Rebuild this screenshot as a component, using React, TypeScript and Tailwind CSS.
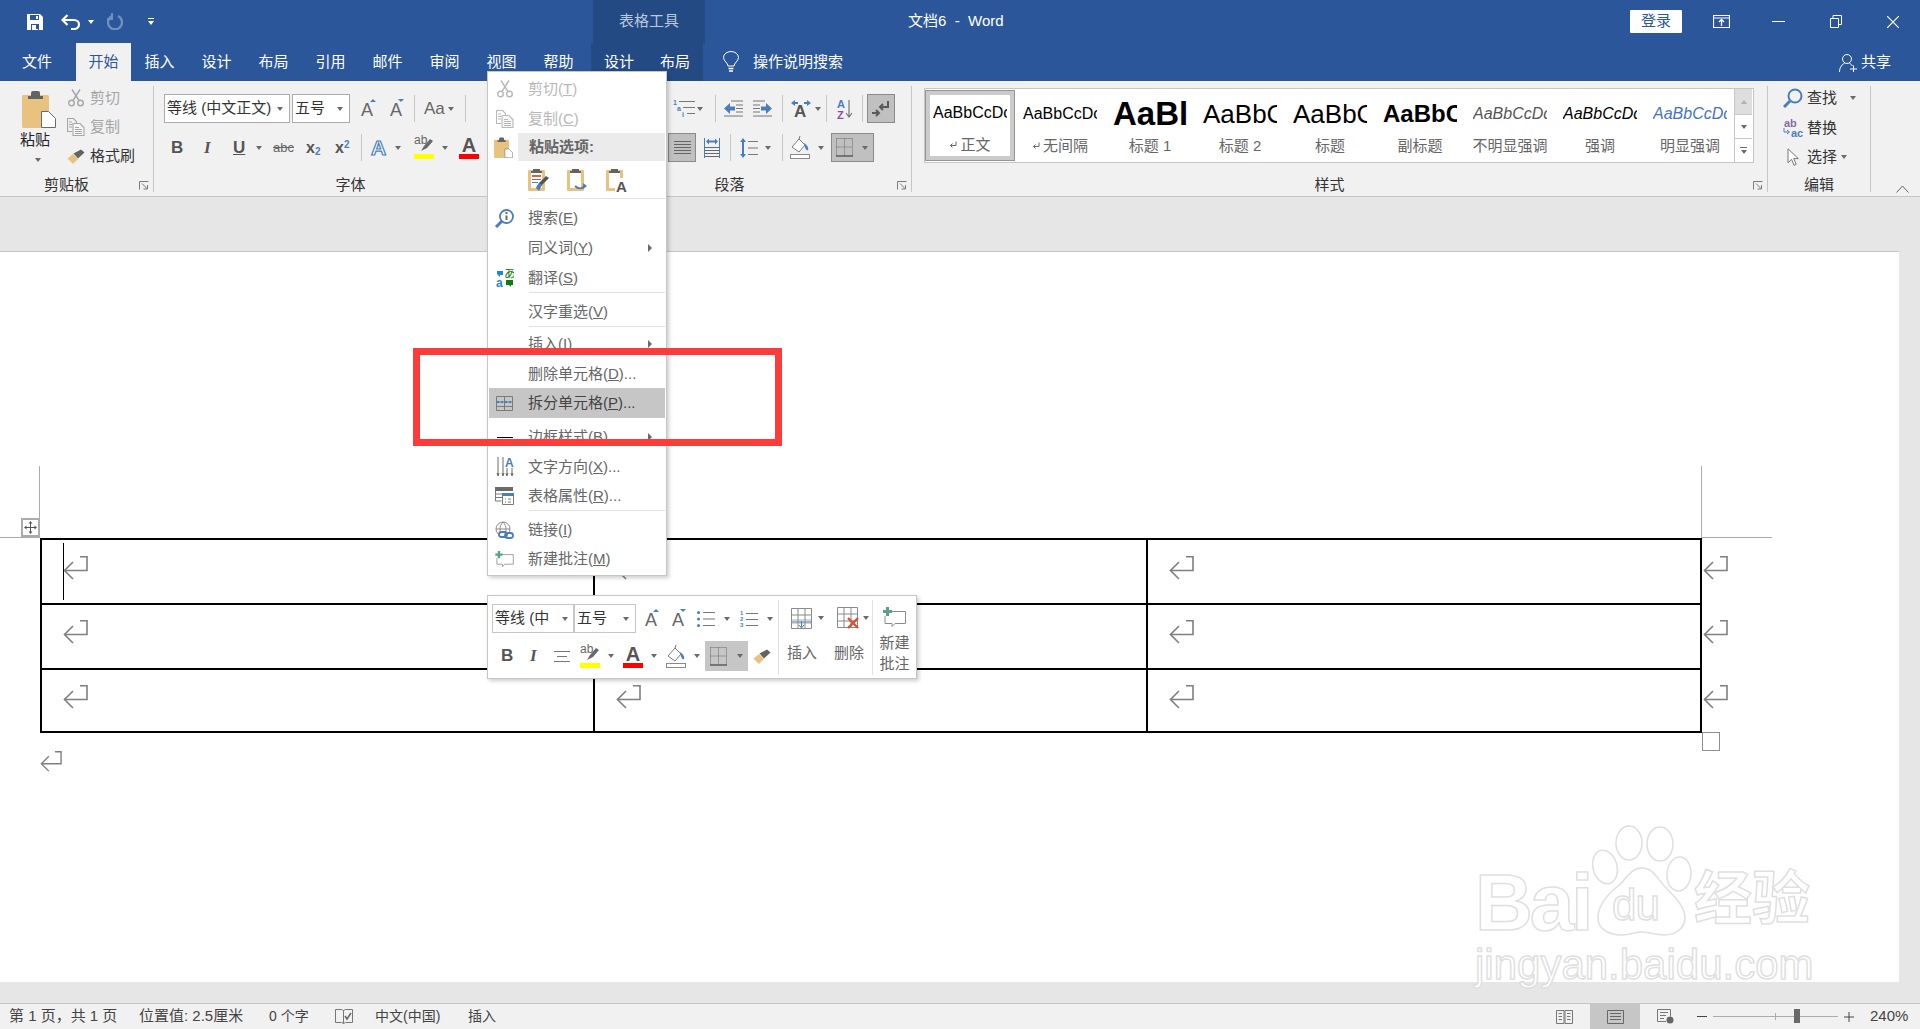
import React from 'react';

const GREY = '#6a6a6a';
const BLUE = '#4a7ebb';
const TAN = '#e8c27f';

function Caret({ className = '' }: { className?: string }) {
  return <span className={'block w-0 h-0 shrink-0 border-x-[3px] border-x-transparent border-t-[4px] border-t-[#6a6a6a] ' + className} />;
}

function Sep({ className = '' }: { className?: string }) {
  return <span className={'block w-px h-[27px] shrink-0 bg-[#c6c6c6] ' + className} />;
}

function Launcher() {
  return (
    <svg width="10" height="9" viewBox="0 0 10 9" className="absolute right-[4px] top-[3px]" fill="none" stroke="#7a7a7a">
      <path d="M.5 8.5v-8h9" />
      <path d="M3 2.5l5 5M8.5 4v4h-4" />
    </svg>
  );
}

function ReturnMark({ className = '' }: { className?: string }) {
  return (
    <svg width="25" height="24" viewBox="0 0 25 24" fill="none" stroke="#7f7f7f" strokeWidth="1.6" className={'block shrink-0 ' + className}>
      <path d="M17 .8h7v13.7H1.5" />
      <path d="M10 6l-8.5 8.5L10 23" />
    </svg>
  );
}

function Scissors({ color = '#a6a6a6' }: { color?: string }) {
  return (
    <svg width="16" height="18" viewBox="0 0 16 18" fill="none" stroke={color} strokeWidth="1.4">
      <circle cx="3.5" cy="14" r="2.8" />
      <circle cx="12.5" cy="14" r="2.8" />
      <path d="M5 11.5L12 .5M11 11.5L4 .5" />
    </svg>
  );
}

function CopyIcon({ color = '#a6a6a6' }: { color?: string }) {
  return (
    <svg width="18" height="18" viewBox="0 0 18 18" fill="none" stroke={color} strokeWidth="1.1">
      <path d="M5 13.5H.5V.5h6l3 3v2" />
      <path d="M6 5.5h7l4 4v8H6z" fill="#f6f6f6" />
      <path d="M8 9.5h4M8 11.5h7M8 13.5h7M8 15.5h7M2 4h3M2 6.5h3M2 9h3" />
    </svg>
  );
}

function PasteIcon({ w = 34, h = 38 }: { w?: number; h?: number }) {
  return (
    <svg width={w} height={h} viewBox="0 0 34 38" className="block">
      <rect x="0" y="5" width="27" height="33" rx="1.5" fill={TAN} />
      <path d="M9 6V3a2 2 0 012-2h5a2 2 0 012 2v3h3v3H6V6z" fill="#636363" />
      <path d="M19.5 21.5h7l7 7v9h-14z" fill="#fff" stroke="#6a6a6a" />
    </svg>
  );
}

function Brush() {
  return (
    <svg width="18" height="15" viewBox="0 0 18 15">
      <path d="M.5 9.5L6 5l5 5-5 5z" fill={TAN} />
      <path d="M6.5 4.5L14 .5l3.500 3L11 9.500z" fill="#636363" />
    </svg>
  );
}

function GrowA({ down = false, w = 15 }: { down?: boolean; w?: number }) {
  return (
    <span className="relative block h-[20px] shrink-0 text-[#666] text-[18px] leading-[22px]" style={{ width: w }}>
      A
      <span className={'absolute right-0 top-0 w-0 h-0 border-x-[3px] border-x-transparent ' + (down ? 'border-t-[3px] border-t-[#4a7ebb]' : 'border-b-[3px] border-b-[#4a7ebb]')} />
    </span>
  );
}

function Highlighter() {
  return (
    <span className="relative block w-[20px] h-[23px] shrink-0">
      <span className="absolute left-0 top-[-2px] text-[12px] leading-[12px] text-[#666]">ab</span>
      <svg width="20" height="23" viewBox="0 0 20 23" className="absolute left-0 top-0">
        <path d="M7 15l3-5 6-7 3 2-6 7z" fill="#6a6a6a" />
      </svg>
      <span className="absolute left-0 bottom-0 w-full h-[5px] bg-[#ffff00]" />
    </span>
  );
}

function ColorA() {
  return (
    <span className="relative block w-[20px] h-[23px] shrink-0 text-center text-[#555] text-[20px] font-bold leading-[18px]">
      A
      <span className="absolute left-0 bottom-0 w-full h-[5px] bg-[#ff0000]" />
    </span>
  );
}

function Bucket() {
  return (
    <svg width="20" height="23" viewBox="0 0 20 23" fill="none">
      <path d="M2 11l7-8 6 6-6 7z" stroke="#7a7a7a" fill="#fff" />
      <path d="M9 3l1-3" stroke="#7a7a7a" />
      <path d="M14 7c3 2 5 5 4 7-2 1-3-2-4-7z" fill={BLUE} />
      <rect x=".5" y="18.5" width="19" height="4" stroke="#8a8a8a" fill="#fff" />
    </svg>
  );
}

function BorderIcon() {
  return (
    <svg width="17" height="19" viewBox="0 0 17 19" fill="none">
      <path d="M.5.5h16v17M.5 .5v17M8.5 .5v17M.5 9h16" stroke="#6a6a6a" strokeDasharray="1 1" />
      <path d="M0 18h17" stroke="#555" strokeWidth="1.4" />
    </svg>
  );
}

function Lines({ w = 18, n = 6, color = '#777' }: { w?: number; n?: number; color?: string }) {
  return (
    <svg width={w} height={n * 3} viewBox={'0 0 ' + w + ' ' + n * 3} stroke={color}>
      {Array.from({ length: n }).map((_, i) => (
        <path key={i} d={'M0 ' + (i * 3 + 1.5) + 'h' + w} />
      ))}
    </svg>
  );
}

function NumberList() {
  return (
    <svg width="18" height="18" viewBox="0 0 18 18" fill={BLUE} stroke="none" fontSize="6" fontFamily="Liberation Sans" fontWeight="bold">
      <text x="0" y="5">1</text>
      <text x="0" y="11">2</text>
      <text x="0" y="17">3</text>
      <path d="M6 3h12v1H6zM6 9h12v1H6zM6 15h12v1H6z" fill="#777" />
    </svg>
  );
}

function BulletList() {
  return (
    <svg width="18" height="18" viewBox="0 0 18 18">
      <circle cx="1.5" cy="2.5" r="1.5" fill={BLUE} />
      <circle cx="1.5" cy="9" r="1.5" fill={BLUE} />
      <circle cx="1.5" cy="15.5" r="1.5" fill={BLUE} />
      <path d="M6 2h12v1H6zM6 8.5h12v1H6zM6 15h12v1H6z" fill="#777" />
    </svg>
  );
}

function MultiLevel() {
  return (
    <svg width="22" height="17" viewBox="0 0 22 17" fontSize="7" fontFamily="Liberation Sans" fontWeight="bold" fill={BLUE}>
      <text x="0" y="5">1</text>
      <text x="4" y="11">a</text>
      <text x="9" y="17">i</text>
      <path d="M6 1h16v1H6zM10 7h12v1H10zM14 13h8v1h-8z" fill="#777" />
    </svg>
  );
}

function Indent({ flip = false }: { flip?: boolean }) {
  return (
    <svg width="19" height="17" viewBox="0 0 19 17" className={flip ? '-scale-x-100' : ''}>
      <path d="M0 8.5L6 3v3.5h5v4H6V14z" fill={BLUE} />
      <path d="M7 .5h12v1H7zM12 4.5h7v1h-7zM12 8h7v1h-7zM12 11.5h7v1h-7zM0 15.5h19v1H0z" fill="#777" />
    </svg>
  );
}

function TextDirection() {
  return (
    <svg width="20" height="17" viewBox="0 0 20 17" fontFamily="Liberation Sans" fontWeight="bold">
      <text x="3" y="17" fontSize="17" fill="#555">A</text>
      <path d="M0 3l4-3v2h3v2H4v2zM20 3l-4-3v2h-3v2h3v2z" fill={BLUE} />
    </svg>
  );
}

function SortAZ() {
  return (
    <svg width="16" height="20" viewBox="0 0 16 20" fontFamily="Liberation Sans" fontWeight="bold" fontSize="11">
      <text x="0" y="9" fill={BLUE}>A</text>
      <text x="0" y="20" fill="#8a4fa5">Z</text>
      <path d="M12 1v17M9 14l3 4 3-4" fill="none" stroke="#777" strokeWidth="1.2" />
    </svg>
  );
}

function PilcrowArrows() {
  return (
    <svg width="18" height="18" viewBox="0 0 18 18" fill="none" stroke="#5a5a5a" strokeWidth="2">
      <path d="M16 1v6H8M11 4L8 7l3 3" />
      <path d="M0 13h7M4 10l3 3-3 3" />
    </svg>
  );
}

function Distribute() {
  return (
    <svg width="18" height="20" viewBox="0 0 18 20">
      <path d="M1 6.5V0h1v20H1zM16 0h1v20h-1z" fill={BLUE} />
      <path d="M3 3.5l3-3v2h6v-2l3 3-3 3v-2H6v2z" fill={BLUE} />
      <path d="M2 9h14v1H2zM2 12h14v1H2zM2 15h14v1H2zM2 18h14v1H2z" fill="#666" />
    </svg>
  );
}

function LineSpacing() {
  return (
    <svg width="18" height="20" viewBox="0 0 18 20">
      <path d="M3 0l3 4H4v12h2l-3 4-3-4h2V4H0z" fill={BLUE} />
      <path d="M8 3h10v1H8zM8 9.5h10v1H8zM8 16h10v1H8z" fill="#777" />
    </svg>
  );
}

function Magnifier() {
  return (
    <svg width="20" height="20" viewBox="0 0 20 20" fill="none" stroke={BLUE}>
      <circle cx="12" cy="8" r="6.5" strokeWidth="2" />
      <path d="M7 13l-6 6" strokeWidth="3" />
    </svg>
  );
}

function Replace() {
  return (
    <svg width="20" height="18" viewBox="0 0 20 18" fontFamily="Liberation Sans" fontWeight="bold" fontSize="11">
      <text x="1" y="8" fill="#8a6aa5">ab</text>
      <text x="8" y="18" fill={BLUE}>ac</text>
      <path d="M1 9v4h5M4 11l2.500 2L4 15" fill="none" stroke={BLUE} />
    </svg>
  );
}

function CursorIcon() {
  return (
    <svg width="12" height="18" viewBox="0 0 12 18" fill="#fff" stroke="#777">
      <path d="M1 .8v14l3.5-3.5 2.5 6 2.2-1-2.5-5.7h4.6z" />
    </svg>
  );
}

function Group({ w, label, launcher, pr, children }: { w: string; label: string; launcher?: boolean; pr?: string; children: React.ReactNode }) {
  return (
    <div className={'flex flex-col h-[106px] border-r border-[#c6c6c6] shrink-0 ' + w}>
      <div className="h-[92px] shrink-0">{children}</div>
      <div className={'relative h-[14px] flex justify-center items-center text-[15px] leading-[14px] text-[#333] ' + (pr || '')}>
        {label}
        {launcher && <Launcher />}
      </div>
    </div>
  );
}

function Combo({ w, text }: { w: string; text: string }) {
  return (
    <span className={'flex items-center h-[29px] shrink-0 bg-white border border-[#ababab] text-[15px] text-[#333] overflow-hidden whitespace-nowrap ' + w}>
      <span className="pl-[2px] flex-1 overflow-hidden">{text}</span>
      <Caret className="mr-[6px]" />
    </span>
  );
}

function StyleItem({ sample, sampleClass, label, mark, selected }: { sample: string; sampleClass: string; label: string; mark?: boolean; selected?: boolean }) {
  const body = (
    <>
      <div className={'h-[46px] flex items-center overflow-hidden whitespace-nowrap mx-auto w-[74px] ' + sampleClass}>{sample}</div>
      <div className="h-[18px] flex items-center justify-center gap-[3px] text-[15px] text-[#666] whitespace-nowrap">
        {mark && (
          <svg width="8" height="8" viewBox="0 0 8 8" fill="none" stroke="#666">
            <path d="M7 .5v4H1.5M3.5 2.5l-2 2 2 2" />
          </svg>
        )}
        {label}
      </div>
    </>
  );
  if (selected) {
    return (
      <div className="w-[90px] h-[71px] shrink-0 mt-[1px] border border-[#949494]">
        <div className="border-[4px] border-[#cbcbcb] h-full bg-white overflow-hidden">
          <div className="-mt-[5px] -mx-[5px]">{body}</div>
        </div>
      </div>
    );
  }
  return <div className="w-[90px] shrink-0 pt-[2px]">{body}</div>;
}

function MenuRow({ icon, label, acc, dots, disabled, arrow, selected, className = '' }: { icon?: React.ReactNode; label: string; acc: string; dots?: boolean; disabled?: boolean; arrow?: boolean; selected?: boolean; className?: string }) {
  return (
    <div className={'relative flex items-center h-[30px] mx-px shrink-0 text-[15px] whitespace-nowrap ' + (disabled ? 'text-[#b8b8b8] ' : selected ? 'text-[#444] ' : 'text-[#666] ') + (selected ? 'bg-[#c6c6c6] ' : '') + className}>
      <span className="w-[29px] flex justify-center items-center ml-[1px] shrink-0">{icon}</span>
      <span className="ml-[9px]">
        {label}(<span className="underline">{acc}</span>){dots ? '...' : ''}
      </span>
      {arrow && <span className="absolute left-[159px] w-0 h-0 border-y-[4px] border-y-transparent border-l-[4px] border-l-[#6a6a6a]" />}
    </div>
  );
}

function MenuSep({ className = 'h-[5px]' }: { className?: string }) {
  return (
    <div className={'shrink-0 -mt-px ml-[41px] mr-[1px] ' + className}>
      <div className="h-px bg-[#e1e1e1]" />
    </div>
  );
}

function CommentIcon() {
  return (
    <svg width="19" height="16" viewBox="0 0 23 20" fill="none">
      <path d="M6 4.5h16.5v12H12l-3 3v-3H2V9" stroke="#8a8a8a" />
      <path d="M3 0h3v3h3v3H6v3H3V6H0V3h3z" fill="#5ba08a" />
    </svg>
  );
}

function ContextMenu() {
  return (
    <div className="absolute left-[487px] top-[71px] w-[180px] h-[505px] bg-white border border-[#c6c6c6] shadow-[2px_2px_4px_rgba(0,0,0,0.2)] flex flex-col pt-[2px]">
      <MenuRow disabled label="剪切" acc="T" icon={<Scissors color="#b8b8b8" />} />
      <MenuRow disabled label="复制" acc="C" icon={<CopyIcon color="#b8b8b8" />} />
      <div className="flex h-[28px] -mt-px shrink-0">
        <span className="w-[30px] flex justify-center items-center pl-[1px]"><PasteIcon w={19} h={21} /></span>
        <span className="flex-1 mr-px bg-[#ebebeb] flex items-center pl-[11px] text-[15px] font-bold text-[#666]">粘贴选项:</span>
      </div>
      <div className="flex h-[37px] shrink-0 items-center pl-[40px] gap-[18px]">
        <svg width="21" height="24" viewBox="0 0 21 24">
          <rect y="2" width="17" height="21" rx="1" fill={TAN} />
          <rect x="3" y="5" width="11" height="15" fill="#fff" />
          <path d="M5 3V1h7v2h2v2H3V3z" fill="#636363" />
          <path d="M4 7h9v2H4z" fill="#e06040" />
          <path d="M4 11h9v1H4zM4 14h6v1H4z" fill={BLUE} />
          <path d="M8 20l3-5 7-7 3 2-7 7z" fill="#555" />
          <path d="M8 20l3-5 3 2-3 6z" fill={BLUE} />
        </svg>
        <svg width="21" height="24" viewBox="0 0 21 24">
          <rect y="2" width="17" height="21" rx="1" fill={TAN} />
          <rect x="3" y="5" width="11" height="15" fill="#fff" />
          <path d="M5 3V1h7v2h2v2H3V3z" fill="#636363" />
          <path d="M8 18c3 3 7 3 10 0" fill="none" stroke={BLUE} strokeWidth="2" />
          <path d="M16 15l4 3-4 3z" fill={BLUE} />
        </svg>
        <svg width="21" height="24" viewBox="0 0 21 24" fontFamily="Liberation Sans" fontSize="15" fontWeight="bold">
          <rect y="2" width="17" height="21" rx="1" fill={TAN} />
          <rect x="3" y="5" width="11" height="15" fill="#fff" />
          <path d="M5 3V1h7v2h2v2H3V3z" fill="#636363" />
          <rect x="9" y="10" width="12" height="14" fill="#fff" />
          <text x="10" y="24" fill="#555">A</text>
        </svg>
      </div>
      <MenuSep className="h-[5px] mt-0" />
      <MenuRow label="搜索" acc="E" icon={
        <svg width="19" height="19" viewBox="0 0 19 19" fill="none" stroke={BLUE}>
          <circle cx="11.5" cy="7.5" r="6.5" strokeWidth="1.8" />
          <path d="M7 12l-6 6" strokeWidth="3" />
          <path d="M10.5 6.5h2V11h-2zM10.5 3h2v2h-2z" fill={GREY} stroke="none" />
        </svg>
      } />
      <MenuRow label="同义词" acc="Y" arrow />
      <MenuRow label="翻译" acc="S" icon={
        <svg width="18" height="18" viewBox="0 0 18 18" fontFamily="Liberation Sans" fontSize="12">
          <text x="0" y="18" fill="#1e88d2" fontWeight="bold">a</text>
          <text x="8" y="9" fill="#107c10" fontFamily="Noto Sans CJK JP">あ</text>
          <path d="M1 2h6v4H4v2L1 5z" fill="#1e88d2" />
          <path d="M10 11h7v5h-2v2l-2-2h-3z" fill="#107c10" />
        </svg>
      } />
      <MenuSep />
      <MenuRow label="汉字重选" acc="V" />
      <MenuSep className="h-[3px]" />
      <MenuRow label="插入" acc="I" arrow />
      <MenuRow label="删除单元格" acc="D" dots />
      <MenuRow selected className="-mt-px" label="拆分单元格" acc="P" dots icon={
        <svg width="17" height="15" viewBox="0 0 17 15" fill="none" stroke="#7a7a7a">
          <path d="M.5.5h16v14H.5zM8.5.5v14M.5 10.5h16" />
          <path d="M.5 6h16" stroke={BLUE} strokeWidth="2" strokeDasharray="3 1" />
        </svg>
      } />
      <MenuSep />
      <MenuRow label="边框样式" acc="B" arrow icon={<span className="block w-[16px] h-px bg-black" />} />
      <MenuRow label="文字方向" acc="X" dots icon={
        <svg width="18" height="20" viewBox="0 0 18 20" fontFamily="Liberation Sans" fontWeight="bold" fontSize="12">
          <text x="9" y="10" fill={BLUE}>A</text>
          <path d="M2 0v17M1 16l1 3 1-3M7 0v17M6 16l1 3 1-3M11 11v6M10 16l1 3 1-3M16 11v6M15 16l1 3 1-3" stroke="#6a6a6a" fill="none" />
        </svg>
      } />
      <MenuRow className="-mt-px" label="表格属性" acc="R" dots icon={
        <svg width="19" height="18" viewBox="0 0 19 18" fill="none" stroke="#7a7a7a">
          <path d="M0 0h18v4H0z" fill="#6a6a6a" stroke="none" />
          <path d="M.5 4v10h6M0 7h7M0 10.5h7" />
          <path d="M7 6h12v3H7z" fill={BLUE} stroke="none" />
          <path d="M7.5 9v8.5h11V9M10 12h1M13 12h3M10 15h1M13 15h3" />
        </svg>
      } />
      <MenuSep />
      <MenuRow label="链接" acc="I" icon={
        <svg width="19" height="19" viewBox="0 0 19 19" fill="none">
          <circle cx="8" cy="8" r="7" stroke="#8a8a8a" />
          <path d="M1 8h14M8 1c-4 4-4 10 0 14M8 1c4 4 4 10 0 14" stroke="#8a8a8a" />
          <rect x="4" y="11" width="8" height="5" rx="2.5" stroke={BLUE} strokeWidth="1.8" fill="#fff" />
          <rect x="10" y="12" width="8" height="5" rx="2.5" stroke={BLUE} strokeWidth="1.8" />
        </svg>
      } />
      <MenuRow className="-mt-px" label="新建批注" acc="M" icon={<CommentIcon />} />
    </div>
  );
}

function MiniToolbar() {
  return (
    <div className="absolute left-[487px] top-[595px] w-[430px] h-[84px] bg-white border border-[#c6c6c6] shadow-[2px_2px_4px_rgba(0,0,0,0.2)] flex">
      <div className="w-[290px] shrink-0 flex flex-col pt-[8px]">
        <div className="flex items-center h-[29px]">
          <span className="ml-[4px] w-[82px] flex items-center h-[29px] shrink-0 border border-[#c6c6c6] text-[15px] text-[#333] whitespace-nowrap overflow-hidden">
            <span className="pl-[2px] w-[66px] overflow-hidden">等线 (中</span>
            <Caret className="ml-[3px]" />
          </span>
          <span className="w-[62px] flex items-center h-[29px] shrink-0 border border-[#c6c6c6] text-[15px] text-[#333]">
            <span className="pl-[2px] flex-1">五号</span>
            <Caret className="mr-[6px]" />
          </span>
          <span className="ml-[9px] flex"><GrowA w={14} /></span>
          <span className="ml-[13px] flex"><GrowA w={14} down /></span>
          <span className="ml-[11px]"><BulletList /></span>
          <Caret className="ml-[9px]" />
          <span className="ml-[10px]"><NumberList /></span>
          <Caret className="ml-[9px]" />
        </div>
        <div className="flex items-center h-[30px] mt-[8px]">
          <b className="ml-[13px] w-[9px] text-[17px] text-[#555]">B</b>
          <i className="ml-[20px] w-[8px] text-[17px] font-bold text-[#555] [font-family:'Liberation_Serif',serif]">I</i>
          <span className="ml-[16px]">
            <svg width="16" height="11" viewBox="0 0 16 11" fill="#777"><path d="M0 0h16v1H0zM3 5h10v1H3zM0 10h16v1H0z" /></svg>
          </span>
          <span className="ml-[10px]"><Highlighter /></span>
          <Caret className="ml-[8px]" />
          <span className="ml-[9px]"><ColorA /></span>
          <Caret className="ml-[8px]" />
          <span className="ml-[9px]"><Bucket /></span>
          <Caret className="ml-[8px]" />
          <span className="ml-[5px] w-[43px] h-[30px] bg-[#c6c6c6] flex items-center pl-[5px] shrink-0">
            <BorderIcon />
            <Caret className="ml-[10px]" />
          </span>
          <span className="ml-[5px]"><Brush /></span>
        </div>
      </div>
      <span className="w-px h-[75px] mt-[4px] bg-[#e1e1e1] shrink-0" />
      <div className="w-[93px] shrink-0 flex flex-col pt-[11px] text-[15px] text-[#666]">
        <div className="flex items-center h-[22px]">
          <span className="ml-[12px]">
            <svg width="21" height="21" viewBox="0 0 21 21" fill="none" stroke="#8a8a8a">
              <path d="M0 11h21v5H0z" fill="#c9d9ea" stroke="none" />
              <path d="M.5.5h20v20H.5zM7 .5v20M14 .5v20M.5 7h20M.5 14h20" />
              <path d="M10.5 13v6M8 17l2.5 3 2.5-3" stroke={BLUE} />
            </svg>
          </span>
          <Caret className="ml-[6px]" />
          <span className="ml-[13px]">
            <svg width="23" height="22" viewBox="0 0 23 22" fill="none" stroke="#8a8a8a">
              <path d="M.5.5h20v20H.5zM7 .5v20M14 .5v20M.5 7h20M.5 14h20" />
              <path d="M11 11l10 10M21 11L11 21" stroke="#d9512c" strokeWidth="2.4" />
            </svg>
          </span>
          <Caret className="ml-[3px]" />
        </div>
        <div className="flex mt-[13px] whitespace-nowrap">
          <span className="ml-[8px]">插入</span>
          <span className="ml-[17px]">删除</span>
        </div>
      </div>
      <span className="w-px h-[75px] mt-[4px] bg-[#e1e1e1] shrink-0" />
      <div className="flex-1 flex flex-col items-center pt-[10px] text-[15px] leading-[21px] text-[#666]">
        <svg width="23" height="22" viewBox="0 0 23 20" fill="none">
          <path d="M6 4.5h16.5v12H12l-3 3v-3H2V9" stroke="#8a8a8a" />
          <path d="M3 0h3v3h3v3H6v3H3V6H0V3h3z" fill="#5ba08a" />
        </svg>
        <span className="mt-[4px]">新建</span>
        <span>批注</span>
      </div>
    </div>
  );
}

function Watermark() {
  const stroke = '[-webkit-text-stroke:1.5px_#dfdfdf] text-white';
  return (
    <div className="absolute left-[1475px] top-[822px] w-[350px] h-[170px] pointer-events-none">
      <span className={'absolute left-0 top-[36px] text-[80px] leading-[90px] font-bold tracking-[-3px] ' + stroke}>Bai</span>
      <svg width="105" height="118" viewBox="0 0 105 118" className="absolute left-[115px] top-0" fill="#fff" stroke="#dfdfdf" strokeWidth="1.5">
        <ellipse cx="39" cy="21" rx="13" ry="17" />
        <ellipse cx="70" cy="22" rx="13" ry="17" />
        <ellipse cx="15" cy="45" rx="12" ry="17" transform="rotate(-15 15 45)" />
        <ellipse cx="89" cy="52" rx="12" ry="17" transform="rotate(5 89 52)" />
        <path d="M52 46C40 46 36 58 28 64 18 72 8 84 8 96 8 108 20 113 32 113 40 113 46 110 52 110 58 110 66 113 74 113 86 113 95 106 95 96 95 84 84 74 76 66 68 58 64 46 52 46Z" />
      </svg>
      <span className={'absolute left-[137px] top-[58px] text-[44px] leading-[50px] tracking-[-1px] ' + stroke}>du</span>
      <span className={'absolute left-[219px] top-[42px] text-[58px] leading-[70px] font-bold whitespace-nowrap ' + stroke}>经验</span>
      <span className={'absolute left-0 top-[118px] text-[42px] leading-[50px] whitespace-nowrap ' + stroke}>jingyan.baidu.com</span>
    </div>
  );
}

function TableRow({ h, pt, last }: { h: string; pt: string; last?: boolean }) {
  return (
    <>
      {[0, 1, 2].map((i) => (
        <div key={i} className={h + ' ' + pt + ' pl-[21px] ' + (i < 2 ? 'border-r-2 border-black ' : '') + (last ? '' : 'border-b-2 border-black')}>
          <ReturnMark />
        </div>
      ))}
    </>
  );
}

export default function App() {
  return (
    <div className="relative w-[1920px] h-[1029px] overflow-hidden flex flex-col bg-[#e6e6e6] [font-family:'Liberation_Sans','Noto_Sans_CJK_SC',sans-serif]">
      {/* title bar */}
      <div className="h-[43px] bg-[#2b579a] flex items-center text-white shrink-0">
        <svg width="16" height="16" viewBox="0 0 16 16" className="ml-[27px] shrink-0">
          <path d="M0 0h13l3 3v13H0z" fill="#fff" />
          <path d="M3 1h9v5H3zM4 10h8v6H4z" fill="#2b579a" />
          <path d="M9 2h2v3H9zM5 11h6v5H5z" fill="#fff" />
          <path d="M9 11h2v4H9z" fill="#2b579a" />
        </svg>
        <svg width="20" height="16" viewBox="0 0 20 16" fill="none" stroke="#fff" strokeWidth="2.2" className="ml-[18px] shrink-0">
          <path d="M1.5 6H13a5 4.5 0 010 9h-3" />
          <path d="M6.5 1l-5 5 5 5" />
        </svg>
        <span className="ml-[7px] block w-0 h-0 shrink-0 border-x-[3px] border-x-transparent border-t-[4px] border-t-white" />
        <svg width="16" height="17" viewBox="0 0 16 17" fill="none" stroke="#6f8fbf" strokeWidth="2.4" className="ml-[13px] shrink-0">
          <path d="M11 3a7 7 0 11-6 0" />
          <path d="M5 0v6H0" strokeWidth="2" />
        </svg>
        <span className="ml-[25px] flex flex-col gap-[2px] items-center w-[6px] shrink-0">
          <span className="block w-[6px] h-px bg-white" />
          <span className="block w-0 h-0 border-x-[3px] border-x-transparent border-t-[4px] border-t-white" />
        </span>
        <div className="w-[439px] shrink-0" />
        <div className="w-[112px] h-[43px] bg-[#234a82] flex items-center justify-center text-[15px] text-[#b9c9e0] shrink-0">表格工具</div>
        <div className="w-[203px] shrink-0" />
        <span className="text-[15px] whitespace-nowrap w-[722px] shrink-0">文档6&nbsp; -&nbsp; Word</span>
        <span className="w-[52px] h-[23px] bg-white rounded-[1px] text-[#2b579a] text-[15px] flex items-center justify-center shrink-0">登录</span>
        <svg width="17" height="13" viewBox="0 0 17 13" fill="none" stroke="#fff" className="ml-[31px] shrink-0">
          <path d="M.5.5h16v12H.5zM0 3h17" strokeWidth="1.2" />
          <path d="M8.5 11V5M6 7l2.5-2.5L11 7" strokeWidth="1.3" />
        </svg>
        <span className="ml-[42px] w-[13px] h-px bg-white shrink-0" />
        <svg width="12" height="13" viewBox="0 0 12 13" fill="none" stroke="#fff" className="ml-[45px] shrink-0">
          <path d="M.5 3.5h8v9h-8zM3 3.5V.5h8.5v9H9" />
        </svg>
        <svg width="12" height="12" viewBox="0 0 12 12" fill="none" stroke="#fff" strokeWidth="1.2" className="ml-[45px] shrink-0">
          <path d="M0 0l12 12M12 0L0 12" />
        </svg>
      </div>
      {/* tab row */}
      <div className="h-[38px] bg-[#2b579a] flex text-[15px] text-white shrink-0">
        <span className="w-[74px] mr-[2px] flex items-center justify-center">文件</span>
        <span className="w-[55px] flex items-center justify-center bg-[#f1f1f1] text-[#2b579a]">开始</span>
        {['插入', '设计', '布局', '引用', '邮件', '审阅', '视图', '帮助'].map((t) => (
          <span key={t} className="w-[57px] flex items-center justify-center">{t}</span>
        ))}
        <div className="w-[112px] ml-[4px] flex bg-[#234a82]">
          <span className="w-[56px] flex items-center justify-center">设计</span>
          <span className="w-[56px] flex items-center justify-center">布局</span>
        </div>
        <svg width="16" height="22" viewBox="0 0 16 22" fill="none" stroke="#fff" className="ml-[20px] mt-[8px] shrink-0">
          <path d="M5 15c0-3-4.5-5-4.5-8.5a7.5 6 0 0115 0C15.5 10 11 12 11 15z" />
          <path d="M5.5 17.5h5M6 20h4" strokeWidth="1.5" />
        </svg>
        <span className="ml-[14px] flex items-center whitespace-nowrap">操作说明搜索</span>
        <svg width="18" height="18" viewBox="0 0 18 18" fill="none" stroke="#fff" className="ml-[996px] mt-[11px] shrink-0">
          <circle cx="8" cy="5" r="4.5" />
          <path d="M.5 18c0-5 3-8 5-8.5M10.5 9.5c1 .3 2 1 3 2.5M11 15h7M14.5 11.5v7" />
        </svg>
        <span className="ml-[4px] flex items-center">共享</span>
      </div>
      {/* ribbon */}
      <div className="h-[116px] bg-[#f1f1f1] border-b border-[#c6c6c6] flex pt-[5px] shrink-0 text-[#444]">
        <Group w="w-[154px]" label="剪贴板" launcher pr="pr-[20px]">
          <div className="flex">
            <div className="w-[67px] shrink-0 flex flex-col items-start">
              <span className="ml-[22px] mt-[4px]"><PasteIcon /></span>
              <span className="ml-[20px] mt-[4px] text-[15px] text-[#222] leading-[16px]">粘贴</span>
              <Caret className="ml-[35px] mt-[10px]" />
            </div>
            <div className="flex flex-col text-[15px]">
              <span className="flex items-center h-[24px] text-[#a6a6a6]"><span className="w-[18px] flex justify-center"><Scissors /></span><span className="ml-[5px]">剪切</span></span>
              <span className="flex items-center h-[24px] mt-[5px] text-[#a6a6a6]"><span className="w-[18px] flex justify-center"><CopyIcon /></span><span className="ml-[5px]">复制</span></span>
              <span className="flex items-center h-[24px] mt-[5px] text-[#333]"><span className="w-[18px] flex justify-center"><Brush /></span><span className="ml-[5px]">格式刷</span></span>
            </div>
          </div>
        </Group>
        <Group w="w-[394px]" label="字体">
          <div className="flex items-center mt-[8px] h-[29px]">
            <span className="ml-[10px] flex"><Combo w="w-[126px]" text="等线 (中文正文)" /></span>
            <span className="ml-[2px] flex"><Combo w="w-[58px]" text="五号" /></span>
            <span className="ml-[11px] flex"><GrowA /></span>
            <span className="ml-[14px] flex"><GrowA w={14} down /></span>
            <Sep className="ml-[10px]" />
            <span className="ml-[9px] w-[19px] text-[17px] text-[#666] shrink-0">Aa</span>
            <Caret className="ml-[5px]" />
            <Sep className="ml-[11px]" />
          </div>
          <div className="flex items-center mt-[11px] h-[27px] text-[#555]">
            <b className="ml-[17px] w-[11px] text-[17px] shrink-0">B</b>
            <i className="ml-[22px] w-[9px] text-[17px] font-bold shrink-0 [font-family:'Liberation_Serif',serif]">I</i>
            <b className="ml-[20px] w-[10px] text-[17px] underline shrink-0">U</b>
            <Caret className="ml-[13px]" />
            <span className="ml-[11px] w-[20px] text-[13px] line-through text-[#666] shrink-0">abc</span>
            <b className="ml-[13px] w-[14px] text-[16px] shrink-0 whitespace-nowrap">x<sub className="text-[10px] text-[#4a7ebb]">2</sub></b>
            <b className="ml-[15px] w-[15px] text-[16px] shrink-0 whitespace-nowrap">x<sup className="text-[10px] text-[#4a7ebb]">2</sup></b>
            <Sep className="ml-[11px]" />
            <span className="ml-[9px] w-[17px] text-[21px] font-bold text-white shrink-0 leading-[24px] [-webkit-text-stroke:1.2px_#4a7ebb]">A</span>
            <Caret className="ml-[7px]" />
            <span className="ml-[13px]"><Highlighter /></span>
            <Caret className="ml-[8px]" />
            <span className="ml-[11px]"><ColorA /></span>
          </div>
        </Group>
        <Group w="w-[364px]" label="段落" launcher>
          <div className="flex items-center mt-[8px] h-[29px]">
            <span className="ml-[125px]"><MultiLevel /></span>
            <Caret className="ml-[2px]" />
            <Sep className="ml-[12px]" />
            <span className="ml-[8px]"><Indent /></span>
            <span className="ml-[10px]"><Indent flip /></span>
            <Sep className="ml-[10px]" />
            <span className="ml-[8px]"><TextDirection /></span>
            <Caret className="ml-[4px]" />
            <Sep className="ml-[5px]" />
            <span className="ml-[10px]"><SortAZ /></span>
            <Sep className="ml-[9px]" />
            <span className="ml-[4px] w-[28px] h-[29px] bg-[#c0c0c0] border border-[#8a8a8a] flex items-center justify-center shrink-0"><PilcrowArrows /></span>
          </div>
          <div className="flex items-center mt-[10px] h-[29px]">
            <span className="ml-[120px] w-[28px] h-[29px] bg-[#c0c0c0] border border-[#8a8a8a] flex items-center justify-center shrink-0"><Lines w={17} n={5} color="#666" /></span>
            <span className="ml-[7px]"><Distribute /></span>
            <Sep className="ml-[9px]" />
            <span className="ml-[9px]"><LineSpacing /></span>
            <Caret className="ml-[7px]" />
            <Sep className="ml-[11px]" />
            <span className="ml-[7px]"><Bucket /></span>
            <Caret className="ml-[8px]" />
            <span className="ml-[7px] w-[43px] h-[29px] bg-[#c0c0c0] border border-[#8a8a8a] flex items-center pl-[4px] shrink-0">
              <BorderIcon />
              <Caret className="ml-[9px]" />
            </span>
          </div>
        </Group>
        <Group w="w-[856px]" label="样式" launcher pr="pr-[20px]">
          <div className="ml-[12px] mt-[2px] w-[830px] h-[75px] flex bg-white border border-[#c6c6c6]">
            <StyleItem selected sample="AaBbCcDc" sampleClass="text-[16px] text-black" label="正文" mark />
            <StyleItem sample="AaBbCcDc" sampleClass="text-[16px] text-black" label="无间隔" mark />
            <StyleItem sample="AaBl" sampleClass="text-[33px] font-bold text-black" label="标题 1" />
            <StyleItem sample="AaBbC" sampleClass="text-[26px] text-black" label="标题 2" />
            <StyleItem sample="AaBbC" sampleClass="text-[26px] text-black" label="标题" />
            <StyleItem sample="AaBbC" sampleClass="text-[24px] font-bold text-black" label="副标题" />
            <StyleItem sample="AaBbCcDc" sampleClass="text-[16px] italic text-[#555]" label="不明显强调" />
            <StyleItem sample="AaBbCcDc" sampleClass="text-[16px] italic text-black" label="强调" />
            <StyleItem sample="AaBbCcDc" sampleClass="text-[16px] italic text-[#4472c4]" label="明显强调" />
            <div className="ml-[-1px] w-[18px] shrink-0 flex flex-col border-l border-[#c6c6c6]">
              <span className="h-[26px] bg-[#dedede] border-b border-[#c6c6c6] flex items-center justify-center"><span className="w-0 h-0 border-x-[3px] border-x-transparent border-b-[4px] border-b-[#b0b0b0]" /></span>
              <span className="h-[24px] border-b border-[#c6c6c6] flex items-center justify-center"><Caret /></span>
              <span className="flex-1 flex flex-col gap-[2px] items-center justify-center"><span className="block w-[7px] h-px bg-[#6a6a6a]" /><Caret /></span>
            </div>
          </div>
        </Group>
        <Group w="w-[103px]" label="编辑">
          <div className="flex flex-col text-[15px] text-[#333]">
            <span className="flex items-center h-[24px]"><span className="ml-[15px] w-[20px] flex justify-center"><Magnifier /></span><span className="ml-[4px]">查找</span><Caret className="ml-[13px]" /></span>
            <span className="flex items-center h-[24px] mt-[6px]"><span className="ml-[15px] w-[20px] flex justify-center"><Replace /></span><span className="ml-[4px]">替换</span></span>
            <span className="flex items-center h-[24px] mt-[5px]"><span className="ml-[15px] w-[20px] flex justify-center"><CursorIcon /></span><span className="ml-[4px]">选择</span><Caret className="ml-[4px]" /></span>
          </div>
        </Group>
        <div className="flex-1 flex items-end justify-end pr-[11px] pb-[3px]">
          <svg width="13" height="8" viewBox="0 0 13 8" fill="none" stroke="#666"><path d="M.5 7.5l6-6.5 6 6.5" /></svg>
        </div>
      </div>
      {/* document area */}
      <div className="flex-1 min-h-0 pt-[54px] pr-[21px] pb-[21px]">
        <div className="h-full bg-white border-t border-[#c6c6c6] pt-[214px]">
          <div className="flex h-[72px]">
            <div className="relative w-[40px] border-r border-b border-[#ababab] shrink-0">
              <span className="absolute left-[21px] bottom-0 w-[19px] h-[19px] bg-white border-2 border-[#ababab] flex items-center justify-center">
                <svg width="13" height="13" viewBox="0 0 13 13" stroke="#555" fill="#555">
                  <path d="M6.5 1v11M1 6.5h11" fill="none" />
                  <path d="M6.5 0l2 2.5h-4zM6.5 13l2-2.5h-4zM0 6.5l2.5-2v4zM13 6.5l-2.5-2v4z" stroke="none" />
                </svg>
              </span>
            </div>
            <div className="w-[1661px] shrink-0" />
            <div className="w-[71px] border-l border-b border-[#ababab] shrink-0" />
          </div>
          <div className="relative flex ml-[40px]">
            <div className="grid grid-cols-[553px_553px_552px] w-[1662px] border-2 border-black shrink-0">
              <TableRow h="h-[65px]" pt="pt-[16px]" />
              <TableRow h="h-[65px]" pt="pt-[15px]" />
              <TableRow h="h-[61px]" pt="pt-[15px]" last />
            </div>
            <div className="flex flex-col ml-[1px]">
              <div className="h-[67px] pt-[18px]"><ReturnMark /></div>
              <div className="h-[65px] pt-[15px]"><ReturnMark /></div>
              <div className="h-[62px] pt-[15px]"><ReturnMark /></div>
            </div>
            <span className="absolute left-[23px] top-[5px] w-px h-[57px] bg-black" />
            <span className="absolute left-[1662px] top-[194px] w-[18px] h-[19px] border border-[#8f8f8f] bg-white" />
          </div>
          <div className="ml-[40px] mt-[18px]">
            <ReturnMark className="w-[22px] h-[21px]" />
          </div>
        </div>
      </div>
      {/* status bar */}
      <div className="h-[26px] bg-[#f1f1f1] border-t border-[#c6c6c6] flex items-center text-[14px] text-[#444] shrink-0 whitespace-nowrap">
        <span className="ml-[9px] w-[130px] text-[15px]">第 1 页，共 1 页</span>
        <span className="w-[130px] text-[15px]">位置值: 2.5厘米</span>
        <span className="w-[66px]">0 个字</span>
        <svg width="18" height="17" viewBox="0 0 18 17" fill="none" stroke="#777" className="shrink-0">
          <path d="M.5 1.500h6l2 1 2-1h7v13h-7l-2 1-2-1h-6zM8.500 2.500v13" />
          <path d="M10 8l2 3 4-6" stroke="#6a6a6a" strokeWidth="1.6" />
        </svg>
        <span className="ml-[22px] w-[93px]">中文(中国)</span>
        <span className="w-[1088px]">插入</span>
        <svg width="17" height="14" viewBox="0 0 17 14" fill="none" stroke="#777" className="shrink-0">
          <path d="M.5.5h7.5v13H.5zM9 .5h7.5v13H9zM2.500 3.500h3.500M2.500 6.500h3.500M2.500 9.500h3.500M11 3.500h3.500M11 6.500h3.500M11 9.500h3.500" />
        </svg>
        <span className="ml-[17px] w-[50px] h-[25px] bg-[#c6c6c6] flex items-center justify-center shrink-0">
          <svg width="17" height="14" viewBox="0 0 17 14" fill="none" stroke="#666"><path d="M.5.5h16v13H.5zM3 3.500h11M3 6.500h11M3 9.500h11" /></svg>
        </span>
        <svg width="17" height="15" viewBox="0 0 17 15" fill="none" stroke="#777" className="ml-[17px] shrink-0">
          <path d="M9 12.500H.5V.5h13v7M3 3.500h8M3 6.500h6M3 9.500h4" />
          <circle cx="13" cy="11" r="3.5" fill="#666" stroke="none" />
        </svg>
        <span className="ml-[23px] w-[10px] h-px bg-[#444] shrink-0" />
        <span className="relative ml-[6px] w-[125px] h-px bg-[#ababab] shrink-0">
          <span className="absolute left-[62px] -top-[3px] w-px h-[7px] bg-[#ababab]" />
          <span className="absolute left-[81px] -top-[7px] w-[6px] h-[14px] bg-[#696969]" />
        </span>
        <svg width="10" height="10" viewBox="0 0 10 10" stroke="#444" className="ml-[6px] shrink-0"><path d="M0 5h10M5 0v10" /></svg>
        <span className="ml-[16px] text-[15px]">240%</span>
      </div>

      <ContextMenu />
      <MiniToolbar />
      <div className="absolute left-[413px] top-[348px] w-[369px] h-[98px] border-[7px] border-[#fc3b3b] pointer-events-none" />
      <Watermark />
    </div>
  );
}
